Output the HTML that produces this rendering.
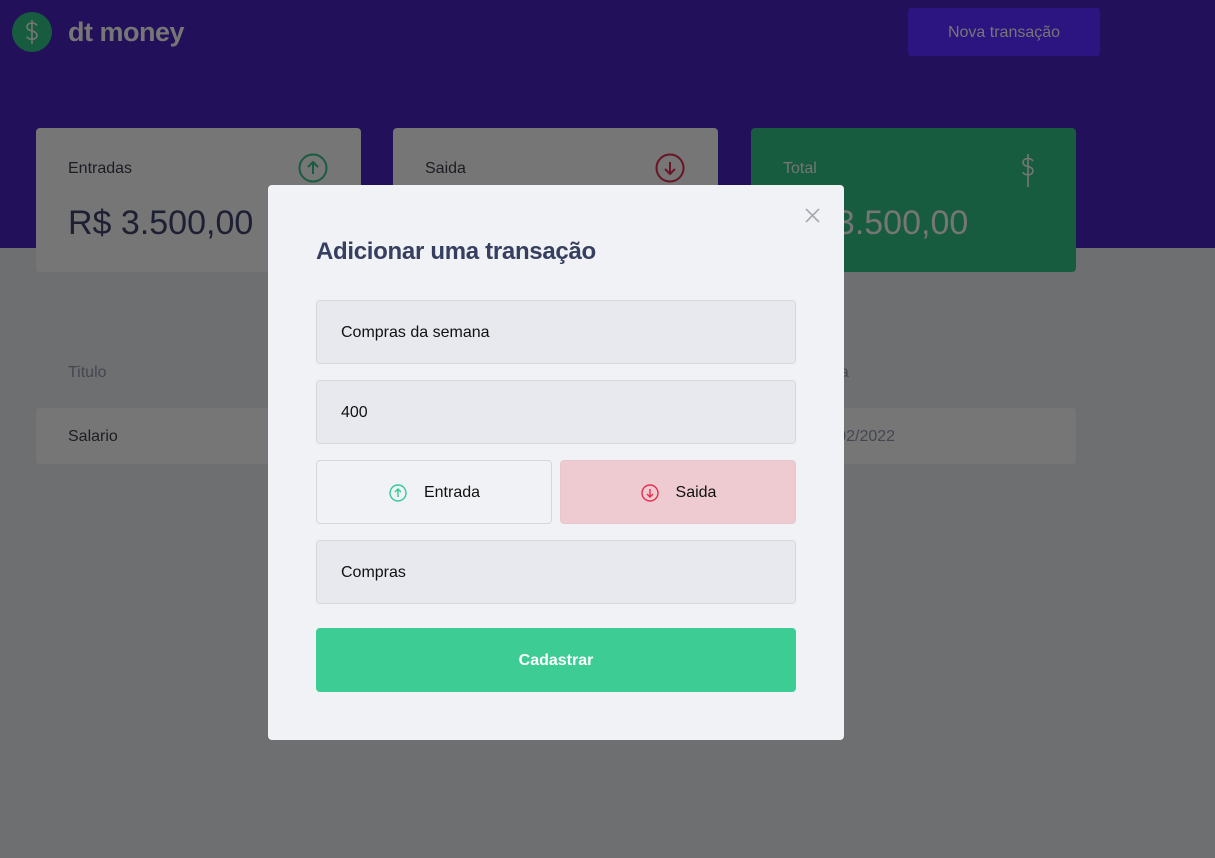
<!DOCTYPE html>
<html><head><meta charset="utf-8"><style>
*{margin:0;padding:0;box-sizing:border-box}
body{width:1215px;height:858px;background:#6e6f71;font-family:"Liberation Sans",sans-serif;position:relative;overflow:hidden}
.hdr{position:absolute;left:0;top:0;width:1215px;height:248px;background:#22105a}
.logo{position:absolute;left:12px;top:12px;width:40px;height:40px;border-radius:50%;background:#185c3f}
.brand{position:absolute;left:68px;top:17px;font-size:27px;font-weight:bold;color:#767676;letter-spacing:-0.5px}
.nova{position:absolute;left:908px;top:8px;width:192px;height:48px;background:#2c1580;color:#767676;font-size:16px;display:flex;align-items:center;justify-content:center;border-radius:3px;padding-top:2px}
.card{position:absolute;top:128px;width:325px;height:144px;background:#767676;border-radius:4px}
.card .l{position:absolute;left:32px;top:32px;font-size:16px;color:#1c1d24}
.card .v{position:absolute;left:32px;top:76px;font-size:34px;color:#1d2033}
.card svg{position:absolute;right:32px;top:24px}
.th{position:absolute;top:364px;font-size:16px;color:#44474f}
.row{position:absolute;left:36px;top:408px;width:1040px;height:56px;background:#767676;border-radius:4px}
.modal{position:absolute;left:268px;top:185px;width:576px;height:555px;background:#f0f2f5;border-radius:4px}
.modal h2{position:absolute;left:48px;top:53px;font-size:24px;color:#363f5f;letter-spacing:-0.3px}
.inp{position:absolute;left:48px;width:480px;height:64px;background:#e7e9ee;border:1px solid #d7d7d7;border-radius:4px;font-size:16px;color:#111;padding-left:24px;padding-top:2px;display:flex;align-items:center}
.tb{position:absolute;top:275px;width:236px;height:64px;border:1px solid #d7d7d7;border-radius:4px;display:flex;align-items:center;justify-content:center;font-size:16px;color:#111;padding-top:2px}
.tb svg{margin-right:16px}
.btn{position:absolute;left:48px;top:443px;width:480px;height:64px;background:#3dcd94;border-radius:4px;color:#fff;font-weight:bold;font-size:16px;display:flex;align-items:center;justify-content:center;padding-top:2px}
</style></head><body>
<div class="hdr"></div>
<div class="logo"><svg width="40" height="40" viewBox="0 0 40 40"><path d="M20 8v24M25 13.5c-1-1.5-3-2.5-5-2.5-3 0-5 1.6-5 4s2 3.3 5 4 5 1.8 5 4.3-2.2 4-5 4c-2.3 0-4.3-1-5.3-2.7" fill="none" stroke="#767676" stroke-width="1.6"/></svg></div>
<div class="brand">dt money</div>
<div class="nova">Nova transação</div>
<div class="card" style="left:36px"><div class="l">Entradas</div><div class="v">R$ 3.500,00</div>
<svg width="32" height="32" viewBox="0 0 32 32"><circle cx="16" cy="16" r="13.5" fill="none" stroke="#185c3f" stroke-width="2"/><path d="M16 22V10M11 15l5-5 5 5" fill="none" stroke="#185c3f" stroke-width="2"/></svg></div>
<div class="card" style="left:393px"><div class="l">Saida</div>
<svg width="32" height="32" viewBox="0 0 32 32"><circle cx="16" cy="16" r="13.5" fill="none" stroke="#6a1424" stroke-width="2"/><path d="M16 10v12M11 17l5 5 5-5" fill="none" stroke="#6a1424" stroke-width="2"/></svg></div>
<div class="card" style="left:751px;background:#185c3f"><div class="l" style="color:#767676">Total</div><div class="v" style="color:#767676">R$ 3.500,00</div>
<svg width="32" height="36" viewBox="0 0 32 36"><path d="M16 2v33M21 9c-1-1.5-3-2.5-5-2.5-3 0-5 1.6-5 4s2 3.3 5 4 5 1.8 5 4.3-2.2 4-5 4c-2.3 0-4.3-1-5.3-2.7" fill="none" stroke="#767676" stroke-width="1.6"/></svg></div>
<div class="th" style="left:68px">Titulo</div>
<div class="th" style="left:815px">Data</div>
<div class="row"><span style="position:absolute;left:32px;top:20px;font-size:16px;color:#1c1d24">Salario</span><span style="position:absolute;left:779px;top:20px;font-size:16px;color:#44474f">12/02/2022</span></div>
<div class="modal">
<svg style="position:absolute;left:537px;top:23px" width="15" height="15" viewBox="0 0 15 15"><path d="M1 1l13 13M14 1L1 14" stroke="#a8a8b3" stroke-width="1.6"/></svg>
<h2>Adicionar uma transação</h2>
<div class="inp" style="top:115px">Compras da semana</div>
<div class="inp" style="top:195px">400</div>
<div class="tb" style="left:48px;background:#f0f2f5"><svg width="20" height="20" viewBox="0 0 20 20"><circle cx="10" cy="10" r="8" fill="none" stroke="#33cc95" stroke-width="1.4"/><path d="M10 14V6M7 9l3-3 3 3" fill="none" stroke="#33cc95" stroke-width="1.4"/></svg>Entrada</div>
<div class="tb" style="left:292px;background:#eecad1;border-color:#e5c8cf"><svg width="20" height="20" viewBox="0 0 20 20"><circle cx="10" cy="10" r="8" fill="none" stroke="#e52e4d" stroke-width="1.4"/><path d="M10 6v8M7 11l3 3 3-3" fill="none" stroke="#e52e4d" stroke-width="1.4"/></svg>Saida</div>
<div class="inp" style="top:355px">Compras</div>
<div class="btn">Cadastrar</div>
</div>
</body></html>
